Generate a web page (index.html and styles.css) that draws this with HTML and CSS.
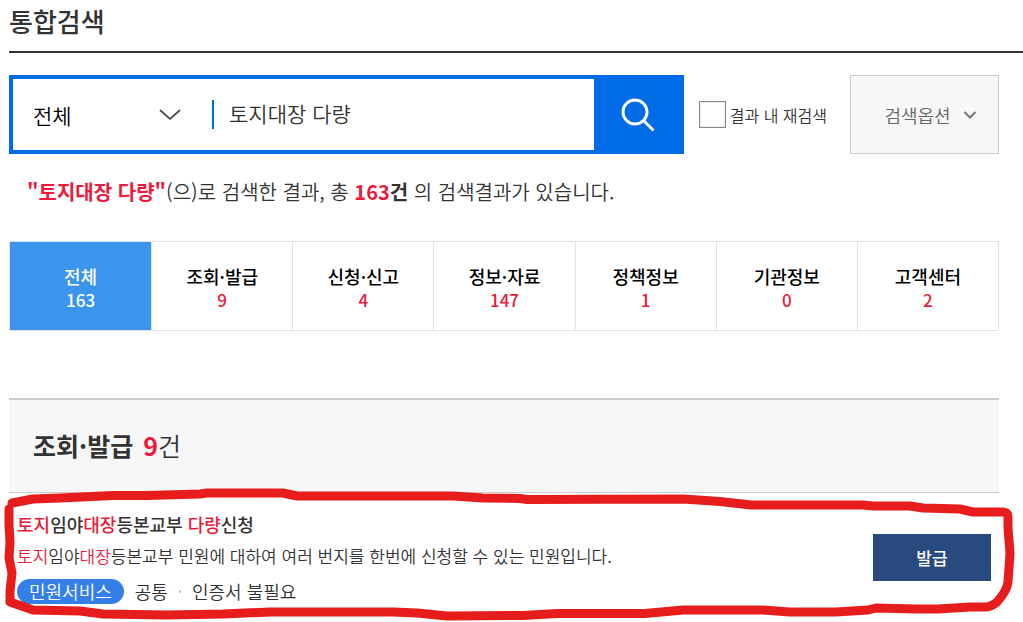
FILE: index.html
```html
<!DOCTYPE html>
<html lang="ko">
<head>
<meta charset="utf-8">
<meta name="viewport" content="width=device-width, initial-scale=1">
<title>통합검색</title>
<link rel="stylesheet" href="styles.css">
</head>
<body>
<main class="page">
  <h1 class="page-title">통합검색</h1>

  <form class="search" role="search">
    <div class="search-box">
      <div class="scope">
        <select class="scope-select" aria-label="검색 범위">
          <option>전체</option>
        </select>
        <svg class="scope-arrow" viewBox="0 0 24 14" aria-hidden="true"><path d="M2 2 L12 11 L22 2"/></svg>
      </div>
      <input class="search-input" type="text" value="토지대장 다량" aria-label="검색어">
      <button class="search-button" type="submit" aria-label="검색">
        <svg class="search-icon" viewBox="0 0 36 36" aria-hidden="true"><circle cx="16" cy="15" r="12"/><path d="M24.500 23.500 L34.500 33.500"/></svg>
      </button>
    </div>
    <label class="within"><input class="within-check" type="checkbox">결과 내 재검색</label>
    <button class="options" type="button">검색옵션
      <svg class="options-arrow" viewBox="0 0 14 10" aria-hidden="true"><path d="M1.500 2 L7 7.500 L12.500 2"/></svg>
    </button>
  </form>

  <p class="summary"><strong class="hit">"토지대장 다량"</strong>(으)로 검색한 결과, 총 <strong><span class="hit">163</span>건</strong> 의 검색결과가 있습니다.</p>

  <nav class="tabs" aria-label="검색결과 분류">
    <a class="tab tab-active" href="#all">전체<span class="tab-count">163</span></a>
    <a class="tab" href="#issue">조회·발급<span class="tab-count">9</span></a>
    <a class="tab" href="#apply">신청·신고<span class="tab-count">4</span></a>
    <a class="tab" href="#info">정보·자료<span class="tab-count">147</span></a>
    <a class="tab" href="#policy">정책정보<span class="tab-count">1</span></a>
    <a class="tab" href="#agency">기관정보<span class="tab-count">0</span></a>
    <a class="tab" href="#support">고객센터<span class="tab-count">2</span></a>
  </nav>

  <section class="results" id="issue">
    <h2 class="results-title">조회·발급 <span class="results-count"><strong class="hit">9</strong>건</span></h2>
    <article class="item">
      <div class="item-body">
        <h3 class="item-title"><span class="hit">토지</span>임야<span class="hit">대장</span>등본교부 <span class="hit">다량</span>신청</h3>
        <p class="item-text"><span class="hit">토지</span>임야<span class="hit">대장</span>등본교부 민원에 대하여 여러 번지를 한번에 신청할 수 있는 민원입니다.</p>
        <div class="meta">
          <span class="badge">민원서비스</span>
          <span>공통</span>
          <span class="dot"></span>
          <span>인증서 불필요</span>
        </div>
      </div>
      <button class="issue-button" type="button">발급</button>
      <svg class="marker" viewBox="0 0 1023 129" preserveAspectRatio="none" aria-hidden="true">
        <path d="M12 10 L33 6 L60 5 L113 2.500 L147 2.500 L200 1 L207 0 L283 0 L297 3 L453 3 L483 5 L520 5.500 L527 6.500 L683 6 L720 8.500 L751 12 L863 12 L873 13 L910 13 L923 15 L960 16 L973 19 L1003 19 Q1008 19 1008 24 L1008 35 L1010 60 L1009 75 L1008 89 Q1007 98 997 109 Q991 114 985 114 L970 114 L938 116 L916 116 L876 115 L868 117 L836 119 L790 119 L763 117 L683 117 L645 120.500 L557 120.500 L523 122.500 L447 123 L417 120 L393 119 L270 119 L223 121 L167 122 L103 121 L80 118 L33 117 L10 109 L10 98 L12 80 L9 65 L10 49 L9 32 L9 16"/>
      </svg>
    </article>
  </section>
</main>
</body>
</html>
```
FILE: styles.css
```css
* {
  box-sizing: border-box;
}

body {
  margin: 0;
  background: #fff;
  color: #333;
  font-family: "Noto Sans CJK KR", "Noto Sans", sans-serif;
  font-weight: 350;
}

h1, h2, h3, p {
  margin: 0;
}

button, input, select {
  margin: 0;
  font: inherit;
}

.page {
  padding: 0 24px 0 9px;
}

.hit {
  color: #ed1a3b;
}

.page-title {
  margin-right: -24px;
  padding: 1px 0 10px;
  border-bottom: 2px solid #333;
  font-size: 26px;
  font-weight: 500;
  line-height: 40px;
}

.search {
  display: flex;
  align-items: stretch;
  margin-top: 22px;
  min-height: 79px;
}

.search-box {
  display: flex;
  flex: 1;
  min-width: 0;
  border: 4px solid #006be6;
}

.scope {
  display: grid;
  flex: none;
  align-items: center;
  width: 201px;
}

.scope-select {
  grid-area: 1 / 1;
  width: 100%;
  height: 29px;
  padding: 0 20px;
  border: 0;
  border-right: 2px solid #006be6;
  background: transparent;
  color: #000;
  font-size: 21px;
  line-height: 28px;
  appearance: none;
}

.scope-arrow {
  grid-area: 1 / 1;
  justify-self: end;
  width: 24px;
  height: 14px;
  margin-right: 32px;
  fill: none;
  stroke: #555;
  stroke-width: 2;
  pointer-events: none;
}

.search-input {
  flex: 1;
  min-width: 0;
  padding: 0 15px 3px;
  border: 0;
  background: transparent;
  color: #333;
  font-size: 21px;
}

.search-button {
  flex: none;
  width: 86px;
  padding: 0;
  border: 0;
  background: #006be6;
}

.search-icon {
  display: block;
  width: 36px;
  height: 36px;
  margin: 0 auto;
  fill: none;
  stroke: #fff;
  stroke-width: 3;
}

.within {
  display: flex;
  align-items: center;
  gap: 4px;
  margin: 0 23px 0 15px;
  font-size: 16px;
  white-space: nowrap;
}

.within-check {
  width: 27px;
  height: 27px;
  margin: 0;
  border: 1px solid #888;
  background: #fff;
  box-shadow: inset 0 0 0 1px #eee;
  appearance: none;
}

.options {
  display: flex;
  align-items: center;
  justify-content: center;
  gap: 12px;
  width: 149px;
  padding: 0 0 0 12px;
  border: 1px solid #ccc;
  background: #f7f7f7;
  color: #666;
  font-size: 18px;
}

.options-arrow {
  width: 14px;
  height: 10px;
  fill: none;
  stroke: #777;
  stroke-width: 2;
}

.summary {
  margin-top: 22px;
  padding-left: 18px;
  font-size: 20px;
  line-height: 32px;
}

.summary strong {
  font-weight: 700;
}

.tabs {
  display: grid;
  grid-template-columns: repeat(7, 1fr);
  margin-top: 33px;
  border: 1px solid #e3e3e3;
}

.tab {
  padding: 22px 0 18px;
  border-left: 1px solid #e3e3e3;
  color: #000;
  font-size: 18px;
  font-weight: 500;
  line-height: 24px;
  text-align: center;
  text-decoration: none;
}

.tab:first-child {
  border-left: 0;
}

.tab-count {
  display: block;
  color: #ed1a3b;
  font-size: 17px;
}

.tab-active,
.tab-active .tab-count {
  background: #3c95ec;
  color: #fff;
}

.results {
  margin-top: 67px;
}

.results-title {
  padding: 25px 24px 27px;
  border-top: 2px solid #ccc;
  border-bottom: 1px solid #ccc;
  background: #f7f7f7;
  font-size: 25px;
  font-weight: 700;
  line-height: 40px;
}

.results-count {
  margin-left: 3px;
  font-weight: 350;
}

.results-count .hit {
  font-weight: 700;
}

.item {
  position: relative;
  display: flex;
  align-items: center;
  justify-content: space-between;
  padding: 17px 8px 18px;
}

.item-title {
  font-size: 18px;
  font-weight: 500;
  line-height: 28px;
}

.item-text {
  margin-top: 4px;
  font-size: 17px;
  line-height: 28px;
}

.meta {
  display: flex;
  align-items: center;
  gap: 11px;
  margin-top: 9px;
  font-size: 18px;
  line-height: 25px;
}

.badge {
  padding: 0 12px;
  border-radius: 13px;
  background: #3580e8;
  color: #fff;
}

.dot {
  width: 2px;
  height: 3px;
  background: #ccc;
}

.issue-button {
  flex: none;
  width: 118px;
  height: 47px;
  border: 0;
  background: #294a7e;
  color: #fff;
  font-size: 17px;
  font-weight: 500;
}

.marker {
  position: absolute;
  top: 0;
  left: -9px;
  width: calc(100% + 33px);
  height: 129px;
  overflow: visible;
  fill: none;
  stroke: #e71c1c;
  stroke-width: 9;
  stroke-linecap: round;
  stroke-linejoin: round;
  pointer-events: none;
}
```
